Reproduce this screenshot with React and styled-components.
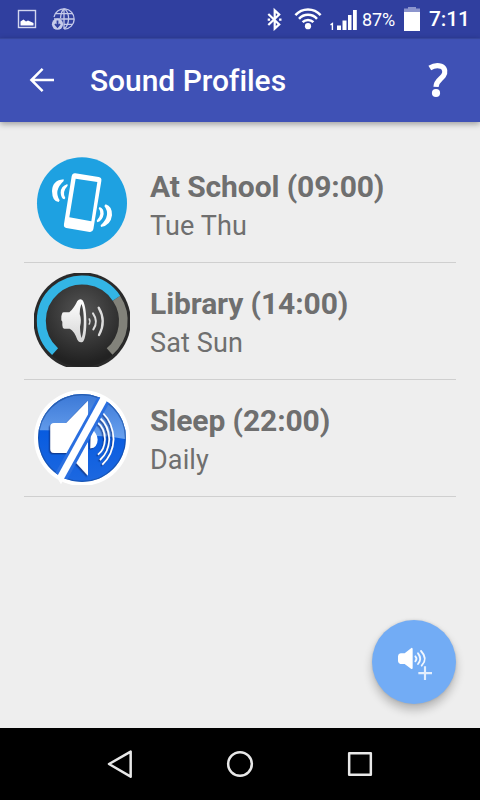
import React from 'react';
import styled, { createGlobalStyle } from 'styled-components';

const GlobalStyle = createGlobalStyle`
    * {
        box-sizing: border-box;
    }
    body {
        margin: 0;
        font-family: Roboto, 'Liberation Sans', sans-serif;
    }
    svg {
        display: block;
        flex: none;
    }
`;
const Screen = styled.div`
    width: 480px;
    height: 800px;
    display: flex;
    flex-direction: column;
    overflow: hidden;
    background-color: #eeeeee;
`;
const StatusBar = styled.div`
    height: 38px;
    flex: none;
    display: flex;
    align-items: center;
    justify-content: space-between;
    padding: 0 10px 0 16px;
    background-color: #303f9f;
`;
const StatusGroup = styled.div`
    display: flex;
    align-items: center;
    gap: ${props => props.$gap};
`;
const Battery = styled.span`
    width: 34px;
    margin: 2px 7px 0 5px;
    color: white;
    font-size: 18px;
    line-height: 20px;
    white-space: nowrap;
    letter-spacing: -0.1px;
`;
const Clock = styled.span`
    width: 41px;
    margin-left: 8px;
    color: white;
    font-size: 21px;
    font-weight: 500;
    line-height: 38px;
    white-space: nowrap;
    letter-spacing: -0.1px;
`;
const Toolbar = styled.header`
    height: 84px;
    flex: none;
    display: flex;
    align-items: center;
    padding: 0 18px;
    background-color: #3f51b5;
    box-shadow: 0 2px 6px rgba(0, 0, 0, 0.35), inset 0 2px 1px -1px rgba(0, 0, 0, 0.15);
    z-index: 1;
`;
const IconButton = styled.button`
    width: 48px;
    height: 48px;
    display: flex;
    align-items: center;
    justify-content: center;
    border: none;
    background: none;
    padding: 0;
    cursor: pointer;
`;
const Title = styled.h1`
    flex: 1;
    margin: 2px 0 0 24px;
    color: white;
    font-size: 30px;
    font-weight: 500;
    line-height: 36px;
    letter-spacing: -0.05px;
`;
const List = styled.ul`
    flex: 1;
    margin: 0;
    padding: 24px 24px 0;
    list-style: none;
`;
const Profile = styled.li`
    height: 117px;
    display: flex;
    padding: 9px 10px 0;
    border-bottom: solid 1px #cfcfcf;
    cursor: pointer;
`;
const ProfileText = styled.div`
    margin-left: 20px;
    padding-top: 12px;
    color: #6f6f6f;
    white-space: nowrap;
`;
const ProfileName = styled.h2`
    margin: 0;
    font-size: 30px;
    font-weight: 700;
    line-height: 40px;
    letter-spacing: -0.1px;
`;
const ProfileDays = styled.p`
    margin: 0;
    font-size: 27px;
    line-height: 38px;
    letter-spacing: 0.12px;
`;
const AddButton = styled.button`
    position: absolute;
    left: 372px;
    top: 620px;
    width: 84px;
    height: 84px;
    padding: 0;
    border: none;
    border-radius: 50%;
    background-color: #72acf5;
    box-shadow: 0 6px 10px rgba(0, 0, 0, 0.24), 0 0 3px rgba(0, 0, 0, 0.12);
    cursor: pointer;
`;
const NavBar = styled.nav`
    height: 72px;
    flex: none;
    display: flex;
    justify-content: center;
    background-color: black;
`;
const NavButton = styled(IconButton)`
    width: 120px;
    height: 72px;
`;

const PictureIcon = () => (
    <svg width="22" height="24" viewBox="16 7 22 24">
        <rect x="18.5" y="10.5" width="17" height="17" fill="none" stroke="#d3d7ef" strokeWidth="1.4" />
        <path d="M20.5 25.5V21.5L23.5 19.5L26 21.5L28 20.5L33.5 23V25.5Z" fill="white" />
    </svg>
);

const GlobeIcon = () => (
    <svg width="24" height="24" viewBox="51 7 24 24">
        <g fill="none" stroke="#c5cae9" strokeWidth="1.3">
            <path d="M54 17A10.2 10.2 0 1 1 64.5 29.2" />
            <path d="M60.5 18C61 13.5 62.5 9.5 64.3 9C67 10 68.8 15 68.6 19C68.4 24 66 28 64 29M64 9V29M55.5 13.7H72.5M54 19H74M64 24.3H72.5" />
        </g>
        <circle cx="57.5" cy="24.2" r="5.6" fill="#c5cae9" />
        <path d="M57.5 20.5V26M55 24L57.5 26.8L60 24" fill="none" stroke="#303f9f" strokeWidth="1.8" />
    </svg>
);

const BluetoothIcon = () => (
    <svg width="18" height="24" viewBox="266.5 7 18 24">
        <path d="M268.8 14L279.7 24.4L275.2 28.6V10.4L279.7 14.6L268.8 25" fill="none" stroke="white" strokeWidth="2.2" />
        <path d="M268.2 18.4H270.6V20.8H268.2ZM279.6 18.4H282V20.8H279.6Z" fill="white" />
    </svg>
);

const WifiIcon = () => (
    <svg width="28" height="24" viewBox="295 7 28 24">
        <g fill="none" stroke="white" strokeWidth="2.5">
            <path d="M296.4 15.2A17 17 0 0 1 321.6 15.2" />
            <path d="M300 18.8A12 12 0 0 1 318 18.8" />
            <path d="M303.6 22.2A7.6 7.6 0 0 1 314.4 22.2" />
        </g>
        <circle cx="309" cy="26.2" r="3.1" fill="white" />
    </svg>
);

const SignalIcon = () => (
    <svg width="28" height="24" viewBox="329 7 28 24">
        <path d="M330.5 24.8L332.4 23.6V30" fill="none" stroke="white" strokeWidth="1.4" />
        <path d="M337 25.5H341V30H337ZM342.5 20.5H346.5V30H342.5ZM348 15H351.5V30H348ZM353 10H356.8V30H353Z" fill="white" />
    </svg>
);

const BatteryIcon = () => (
    <svg width="18" height="26" viewBox="403 5 18 26">
        <path d="M404 7.5H408V6H416V7.5H420V11H404Z" fill="#8c95cd" />
        <path d="M404 11H420V30H404Z" fill="white" />
    </svg>
);

const BackIcon = () => (
    <svg width="26" height="26" viewBox="29 67 26 26">
        <path d="M54 80H32M42.6 68.8L31.4 80L42.6 91.2" fill="none" stroke="white" strokeWidth="2.5" />
    </svg>
);

const HelpIcon = () => (
    <svg width="24" height="40" viewBox="426 60 24 40">
        <path
            d="M429.8 68C433 66 437.5 65 441 66.2C445.5 68 445.6 72.5 443.4 75.8C441 79.3 436.3 80.8 436 86.8"
            fill="none"
            stroke="white"
            strokeWidth="5.2"
        />
        <circle cx="436" cy="93" r="4.1" fill="white" />
    </svg>
);

const VibrateIcon = () => (
    <svg width="96" height="96" viewBox="30 30 288 288">
        <ellipse cx="174" cy="174.5" rx="135" ry="138" fill="#1ea1e1" />
        <path
            d="M154 85L224 96Q234 98 232 108L208 253Q206 262 197 261L127 249Q118 247 120 237L143 94Q145 84 154 85ZM155 101L136 217L202 229L220 111Z"
            fill="white"
            fillRule="evenodd"
        />
        <g fill="white">
            <path d="M119 103Q85 106 84 138Q85 170 104 171L107 166Q88 137 119 108Z" />
            <path d="M130 117Q110 124 110 143Q111 160 121 163L124 159Q113 141 131 122Z" />
            <path d="M245 178Q265 184 264 211Q260 242 231 246L230 241Q262 211 241 183Z" />
            <path d="M227 186Q240 190 239 207Q236 227 220 232L218 227Q237 208 224 190Z" />
        </g>
    </svg>
);

const VolumeIcon = () => (
    <svg width="96" height="96" viewBox="30 30 288 288">
        <defs>
            <radialGradient id="dial" cx="0.5" cy="0.4" r="0.55">
                <stop offset="0" stopColor="#565656" />
                <stop offset="1" stopColor="#222222" />
            </radialGradient>
            <linearGradient id="cone" x1="0" y1="0" x2="0" y2="1">
                <stop offset="0" stopColor="#ffffff" />
                <stop offset="1" stopColor="#d5d5d5" />
            </linearGradient>
            <clipPath id="dialClip">
                <rect x="30" y="33" width="288" height="282" />
            </clipPath>
        </defs>
        <g clipPath="url(#dialClip)">
            <circle cx="174.5" cy="177" r="146" fill="#2a2a2a" />
            <circle cx="174.5" cy="177" r="138" fill="url(#dial)" />
            <path d="M256.8 268.8A123 123 0 0 0 277.3 108.7" fill="none" stroke="#82827a" strokeWidth="26" />
            <path d="M93.2 268.8A123 123 0 1 1 277.3 108.7" fill="none" stroke="#33b5e5" strokeWidth="27" />
        </g>
        <path
            d="M114 155Q115 151 120 151H136Q150 139 160 117Q166 110 174 113C190 125 192 224 177 239Q166 244 160 233Q151 207 137 200H121Q115 199 115 190V179L112 175V163Z"
            fill="url(#cone)"
        />
        <path d="M172 126C182 145 182 207 173 228C169 218 168 200 168 194Q174 175 167 156Q167 140 172 126Z" fill="#444444" />
        <g fill="none" stroke="#dedede" strokeLinecap="round">
            <path d="M196 171Q200 178 196 186" strokeWidth="5" />
            <path d="M207 154Q224 179 208 202" strokeWidth="6" />
            <path d="M224 137Q248 178 225 219" strokeWidth="7" />
        </g>
    </svg>
);

const MuteIcon = () => (
    <svg width="96" height="96" viewBox="30 27 288 288">
        <defs>
            <linearGradient id="gloss" x1="0" y1="0" x2="0" y2="1">
                <stop offset="0" stopColor="#3b78d6" />
                <stop offset="1" stopColor="#6aa2ef" />
            </linearGradient>
            <linearGradient id="base" x1="0" y1="0" x2="0" y2="1">
                <stop offset="0.4" stopColor="#075be0" />
                <stop offset="1" stopColor="#1d68e0" />
            </linearGradient>
            <filter id="shade" x="-20%" y="-20%" width="140%" height="140%">
                <feDropShadow dx="-4" dy="4" stdDeviation="2" floodColor="#07327f" floodOpacity="0.75" />
            </filter>
            <clipPath id="muteClip">
                <circle cx="174" cy="174" r="132" />
            </clipPath>
        </defs>
        <circle cx="174" cy="174" r="144" fill="white" />
        <g clipPath="url(#muteClip)">
            <rect x="42" y="42" width="264" height="264" fill="url(#base)" />
            <path d="M42 42H306V178Q255 166 198 168Q150 149 42 151Z" fill="url(#gloss)" />
            <circle cx="174" cy="174" r="131" fill="none" stroke="#184996" strokeOpacity="0.6" strokeWidth="5" />
            <g filter="url(#shade)">
                <path d="M79 140Q79 129 90 129H127L192 62V118L136 219H91Q79 219 79 207Z" fill="white" />
                <path d="M192 185V287L152 244Z" fill="white" />
                <path d="M201 149Q220 156 221 179Q220 203 199 205Z" fill="white" />
                <g fill="none" stroke="white" strokeWidth="5">
                    <path d="M220 127Q242 143 243 178Q242 210 222 224" />
                    <path d="M228 114Q254 136 256 178Q254 218 228 240" />
                    <path d="M237 99Q267 129 269 178Q267 224 235 254" />
                </g>
            </g>
            {/* blue gap on both sides of the slash */}
            <path d="M224 46L87 292L121 315L262 57Z" fill="#2a6fe0" />
        </g>
        <path d="M233 46L98 292L111 313L252 57Z" fill="white" />
    </svg>
);

const AddSoundIcon = () => (
    <svg width="84" height="84" viewBox="36 30 252 252">
        <path d="M114 138Q115 130 122 130H134L154 114Q158 112 158 118V173Q158 179 153 176L134 162H121Q115 161 114 154Z" fill="white" />
        <g fill="none" stroke="#f2f7fe" strokeWidth="5.5" strokeLinecap="round">
            <path d="M166 139Q173 146 166 154" />
            <path d="M174 130Q187 146 174 162" />
            <path d="M183 123Q205 146 185 167" />
        </g>
        <path d="M195 169V210M175 189.5H216" fill="none" stroke="#e3eefd" strokeWidth="6.5" />
    </svg>
);

const profiles = [
    { name: 'At School (09:00)', days: 'Tue Thu', Icon: VibrateIcon },
    { name: 'Library (14:00)', days: 'Sat Sun', Icon: VolumeIcon },
    { name: 'Sleep (22:00)', days: 'Daily', Icon: MuteIcon },
];

function App() {
    return (
        <Screen>
            <GlobalStyle />
            <StatusBar>
                <StatusGroup $gap="13px">
                    <PictureIcon />
                    <GlobeIcon />
                </StatusGroup>
                <StatusGroup $gap="0">
                    <StatusGroup $gap="10px">
                        <BluetoothIcon />
                        <StatusGroup $gap="7px">
                            <WifiIcon />
                            <SignalIcon />
                        </StatusGroup>
                    </StatusGroup>
                    <Battery>87%</Battery>
                    <BatteryIcon />
                    <Clock>7:11</Clock>
                </StatusGroup>
            </StatusBar>
            <Toolbar>
                <IconButton aria-label="Back">
                    <BackIcon />
                </IconButton>
                <Title>Sound Profiles</Title>
                <IconButton aria-label="Help">
                    <HelpIcon />
                </IconButton>
            </Toolbar>
            <List>
                {profiles.map(({ name, days, Icon }) => (
                    <Profile key={name}>
                        <Icon />
                        <ProfileText>
                            <ProfileName>{name}</ProfileName>
                            <ProfileDays>{days}</ProfileDays>
                        </ProfileText>
                    </Profile>
                ))}
            </List>
            <AddButton aria-label="Add profile">
                <AddSoundIcon />
            </AddButton>
            <NavBar>
                <NavButton aria-label="Back">
                    <svg width="40" height="40" viewBox="30 48 120 120">
                        <path d="M122 71V146L57 108Z" fill="none" stroke="#e8e8e8" strokeWidth="7.5" strokeLinejoin="round" />
                    </svg>
                </NavButton>
                <NavButton aria-label="Home">
                    <svg width="40" height="40" viewBox="390 48 120 120">
                        <circle cx="450" cy="108" r="35.5" fill="none" stroke="#e8e8e8" strokeWidth="7.5" />
                    </svg>
                </NavButton>
                <NavButton aria-label="Recents">
                    <svg width="40" height="40" viewBox="750 48 120 120">
                        <rect x="777.5" y="75.5" width="65" height="65" fill="none" stroke="#e8e8e8" strokeWidth="7.5" strokeLinejoin="round" />
                    </svg>
                </NavButton>
            </NavBar>
        </Screen>
    );
}

export default App;
